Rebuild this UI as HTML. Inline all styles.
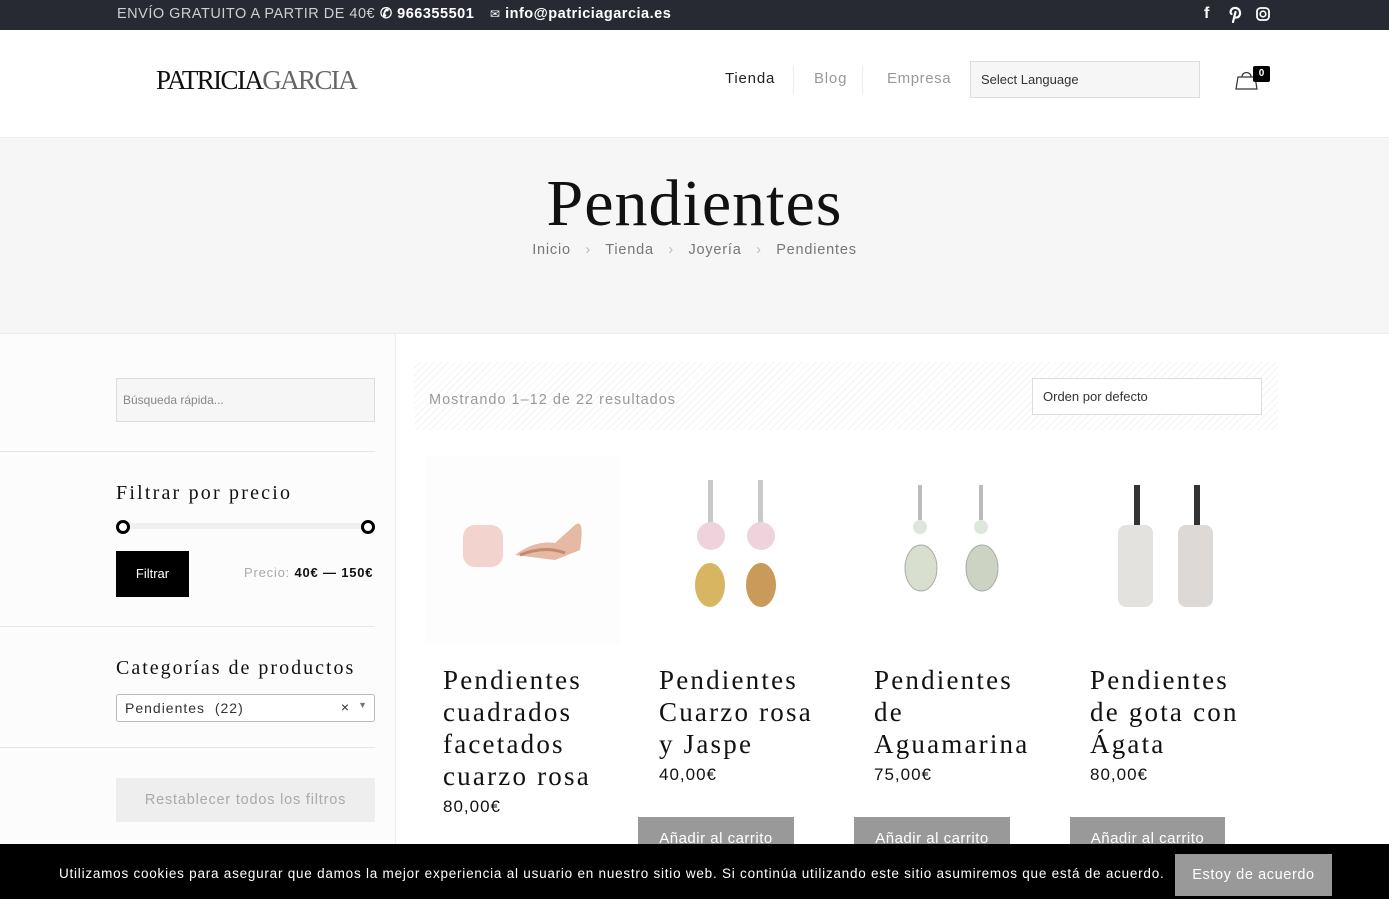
<!DOCTYPE html>
<html><head><meta charset="utf-8"><style>
*{margin:0;padding:0;box-sizing:border-box}
body{width:1389px;height:899px;overflow:hidden;font-family:"Liberation Sans",sans-serif;background:#fff;position:relative}
.abs{position:absolute}
.top{left:0;top:0;width:1389px;height:30px;background:#282a33;color:#fff;font-size:14.5px;letter-spacing:.5px}
.hdr{top:30px;left:0;width:1389px;height:108px;background:#fff;border-bottom:1px solid #eee}
.hero{top:138px;left:0;width:1389px;height:196px;background:#f6f6f6;border-bottom:1px solid #ececec}
.side{top:334px;left:0;width:396px;height:565px;background:#fcfcfc;border-right:1px solid #ececec}
.serif{font-family:"Liberation Serif","DejaVu Serif",serif}
.pt{font-family:"Liberation Serif",serif;font-size:27px;line-height:32px;letter-spacing:2.2px;color:#111}
.price{font-size:17px;letter-spacing:1px;color:#111}
.btn{background:#999;color:#fff;font-size:15px;letter-spacing:.5px;text-align:center;line-height:44px}
.hl{height:1px;background:#e6e6e6}
</style></head><body>
<div class="abs top">
 <span class="abs" style="left:117px;top:6px;color:#cfcfcf">ENVÍO GRATUITO A PARTIR DE 40€</span>
 <span class="abs" style="left:380px;top:6px;font-weight:bold">&#x2706;&nbsp;966355501</span>
 <span class="abs" style="left:490px;top:6px;font-weight:bold"><span style="font-weight:normal;font-size:12px">✉</span> info@patriciagarcia.es</span>
 <span class="abs" style="left:1204px;top:5px;font-weight:bold;font-size:16px">f</span>
 <svg class="abs" style="left:1229px;top:6px" width="13" height="17" viewBox="0 0 13 17"><path d="M4 16 L6.5 6 M6.5 11.5 C12 12.5 13 3 7 2 C2 1.5 0.5 6 2.5 8" fill="none" stroke="#fff" stroke-width="2.2" stroke-linecap="round"/></svg>
 <svg class="abs" style="left:1256px;top:7px" width="14" height="14" viewBox="0 0 14 14"><rect x="1" y="1" width="12" height="12" rx="3.5" fill="none" stroke="#fff" stroke-width="1.8"/><circle cx="7" cy="7" r="2.8" fill="none" stroke="#fff" stroke-width="1.6"/></svg>
</div>
<div class="abs hdr">
 <div class="abs serif" style="left:156px;top:35px;font-size:27px;letter-spacing:-1.6px;color:#111">PATRICIA<span style="color:#666">GARCIA</span></div>
 <span class="abs" style="left:725px;top:40px;font-size:15px;letter-spacing:.8px;color:#222">Tienda</span>
 <div class="abs" style="left:793px;top:35px;width:1px;height:30px;background:#eee"></div>
 <span class="abs" style="left:814px;top:40px;font-size:15px;letter-spacing:.8px;color:#999">Blog</span>
 <div class="abs" style="left:862px;top:35px;width:1px;height:30px;background:#eee"></div>
 <span class="abs" style="left:887px;top:40px;font-size:15px;letter-spacing:.6px;color:#999">Empresa</span>
 <div class="abs" style="left:970px;top:31px;width:230px;height:37px;background:#f6f6f6;border:1px solid #ddd;font-size:13px;color:#333;padding:10px 10px">Select Language</div>
 <svg class="abs" style="left:1235px;top:38px" width="24" height="22" viewBox="0 0 24 22"><path d="M1 21 L3 9 H20 L22 21 Z M7 9 C7 3 16 3 16 9" fill="none" stroke="#333" stroke-width="1.2"/></svg>
 <div class="abs" style="left:1253px;top:36px;width:17px;height:16px;background:#000;color:#fff;font-size:10px;font-weight:bold;text-align:center;line-height:16px;border-radius:2px">0</div>
</div>
<div class="abs hero">
 <div class="abs serif" style="left:0;width:1389px;top:28px;text-align:center;font-size:66px;color:#111;letter-spacing:1px">Pendientes</div>
 <div class="abs" style="left:0;width:1389px;top:104px;text-align:center;font-size:14.5px;letter-spacing:.8px;color:#777">Inicio &nbsp;&nbsp;<span style="color:#bbb">›</span>&nbsp;&nbsp; Tienda &nbsp;&nbsp;<span style="color:#bbb">›</span>&nbsp;&nbsp; Joyería &nbsp;&nbsp;<span style="color:#bbb">›</span>&nbsp;&nbsp; Pendientes</div>
</div>
<div class="abs side">
 <div class="abs" style="left:116px;top:44px;width:259px;height:44px;background:#f6f6f6;border:1px solid #ddd;font-size:12px;color:#888;padding:14px 6px">Búsqueda rápida...</div>
 <div class="abs hl" style="left:0;top:117px;width:375px"></div>
 <div class="abs serif" style="left:116px;top:148px;font-size:20px;letter-spacing:2.2px;color:#111">Filtrar por precio</div>
 <div class="abs" style="left:122px;top:189px;width:246px;height:6px;background:#f0f0f0"></div>
 <div class="abs" style="left:116px;top:186px;width:14px;height:14px;border:3.5px solid #000;border-radius:50%;background:#fff"></div>
 <div class="abs" style="left:361px;top:186px;width:14px;height:14px;border:3.5px solid #000;border-radius:50%;background:#fff"></div>
 <div class="abs" style="left:116px;top:217px;width:73px;height:46px;background:#000;color:#fff;font-size:13px;text-align:center;line-height:46px">Filtrar</div>
 <div class="abs" style="left:244px;top:231px;font-size:13px;letter-spacing:.8px;color:#aaa">Precio: <b style="color:#111">40€ — 150€</b></div>
 <div class="abs hl" style="left:0;top:292px;width:375px"></div>
 <div class="abs serif" style="left:116px;top:323px;font-size:20px;letter-spacing:2px;color:#111">Categorías de productos</div>
 <div class="abs" style="left:116px;top:360px;width:259px;height:28px;border:1px solid #bbb;border-radius:3px;background:#fff;font-size:14px;letter-spacing:1px;color:#333;padding:5px 8px">Pendientes &nbsp;(22)<span class="abs" style="right:24px;top:4px">×</span><span class="abs" style="right:6px;top:5px;font-size:9px;color:#777">▼</span></div>
 <div class="abs hl" style="left:0;top:413px;width:375px"></div>
 <div class="abs" style="left:116px;top:444px;width:259px;height:44px;background:#eee;font-size:14.5px;letter-spacing:.8px;color:#aaa;text-align:center;line-height:44px">Restablecer todos los filtros</div>
</div>
<div class="abs" style="left:414px;top:362px;width:864px;height:68px;background:repeating-linear-gradient(135deg,#fff 0 4px,#f3f3f3 4px 5px)"></div>
<div class="abs" style="left:429px;top:392px;font-size:14.5px;letter-spacing:1px;color:#999">Mostrando 1–12 de 22 resultados</div>
<div class="abs" style="left:1032px;top:378px;width:230px;height:37px;background:#fff;border:1px solid #ddd;font-size:13px;color:#333;padding:10px 10px">Orden por defecto</div>

<div class="abs" style="left:425px;top:455px;width:195px;height:190px;background:#fdfdfd"></div>
<svg class="abs" style="left:425px;top:455px" width="195" height="190"><rect x="38" y="70" width="40" height="42" rx="12" fill="#f3d3cd"/><path d="M90 100 Q110 85 130 88 L150 70 Q160 62 155 95 L130 105 Z" fill="#e6b9a4"/><path d="M95 100 Q120 90 140 98" stroke="#c28a6e" stroke-width="3" fill="none"/></svg>
<svg class="abs" style="left:640px;top:455px" width="195" height="190"><g fill="#c9c9c9"><rect x="68" y="25" width="5" height="45"/><rect x="118" y="25" width="5" height="45"/></g><circle cx="71" cy="81" r="14" fill="#efd3dc"/><circle cx="121" cy="81" r="14" fill="#efd3dc"/><ellipse cx="70" cy="130" rx="15" ry="22" fill="#d8b560"/><ellipse cx="121" cy="130" rx="15" ry="22" fill="#c99a5a"/></svg>
<svg class="abs" style="left:855px;top:455px" width="195" height="190"><g fill="#bbb"><rect x="63" y="30" width="4" height="35"/><rect x="124" y="30" width="4" height="35"/></g><circle cx="65" cy="72" r="7" fill="#dde7dc"/><circle cx="126" cy="72" r="7" fill="#dde7dc"/><ellipse cx="66" cy="113" rx="16" ry="23" fill="#d9dfcf" stroke="#aaa"/><ellipse cx="127" cy="113" rx="16" ry="23" fill="#cdd3c2" stroke="#aaa"/></svg>
<svg class="abs" style="left:1070px;top:455px" width="195" height="190"><g fill="#333"><rect x="64" y="30" width="6" height="40"/><rect x="124" y="30" width="6" height="40"/></g><rect x="48" y="70" width="35" height="82" rx="8" fill="#e4e2df"/><rect x="108" y="70" width="35" height="82" rx="8" fill="#dcd9d6"/></svg>

<div class="abs pt" style="left:443px;top:664px;width:170px">Pendientes cuadrados facetados cuarzo rosa</div>
<div class="abs price" style="left:443px;top:797px">80,00€</div>
<div class="abs pt" style="left:659px;top:664px;width:160px">Pendientes Cuarzo rosa y Jaspe</div>
<div class="abs price" style="left:659px;top:765px">40,00€</div>
<div class="abs btn" style="left:638px;top:817px;width:156px">Añadir al carrito</div>
<div class="abs pt" style="left:874px;top:664px;width:160px">Pendientes de Aguamarina</div>
<div class="abs price" style="left:874px;top:765px">75,00€</div>
<div class="abs btn" style="left:854px;top:817px;width:156px">Añadir al carrito</div>
<div class="abs pt" style="left:1090px;top:664px;width:160px">Pendientes de gota con Ágata</div>
<div class="abs price" style="left:1090px;top:765px">80,00€</div>
<div class="abs btn" style="left:1070px;top:817px;width:155px">Añadir al carrito</div>

<div class="abs" style="left:0;top:844px;width:1389px;height:55px;background:#000"></div>
<div class="abs" style="left:59px;top:866px;font-size:13.5px;letter-spacing:.77px;color:#fff">Utilizamos cookies para asegurar que damos la mejor experiencia al usuario en nuestro sitio web. Si continúa utilizando este sitio asumiremos que está de acuerdo.</div>
<div class="abs" style="left:1175px;top:854px;width:157px;height:42px;background:#999;color:#fff;font-size:14.5px;letter-spacing:.6px;text-align:center;line-height:42px">Estoy de acuerdo</div>
</body></html>
